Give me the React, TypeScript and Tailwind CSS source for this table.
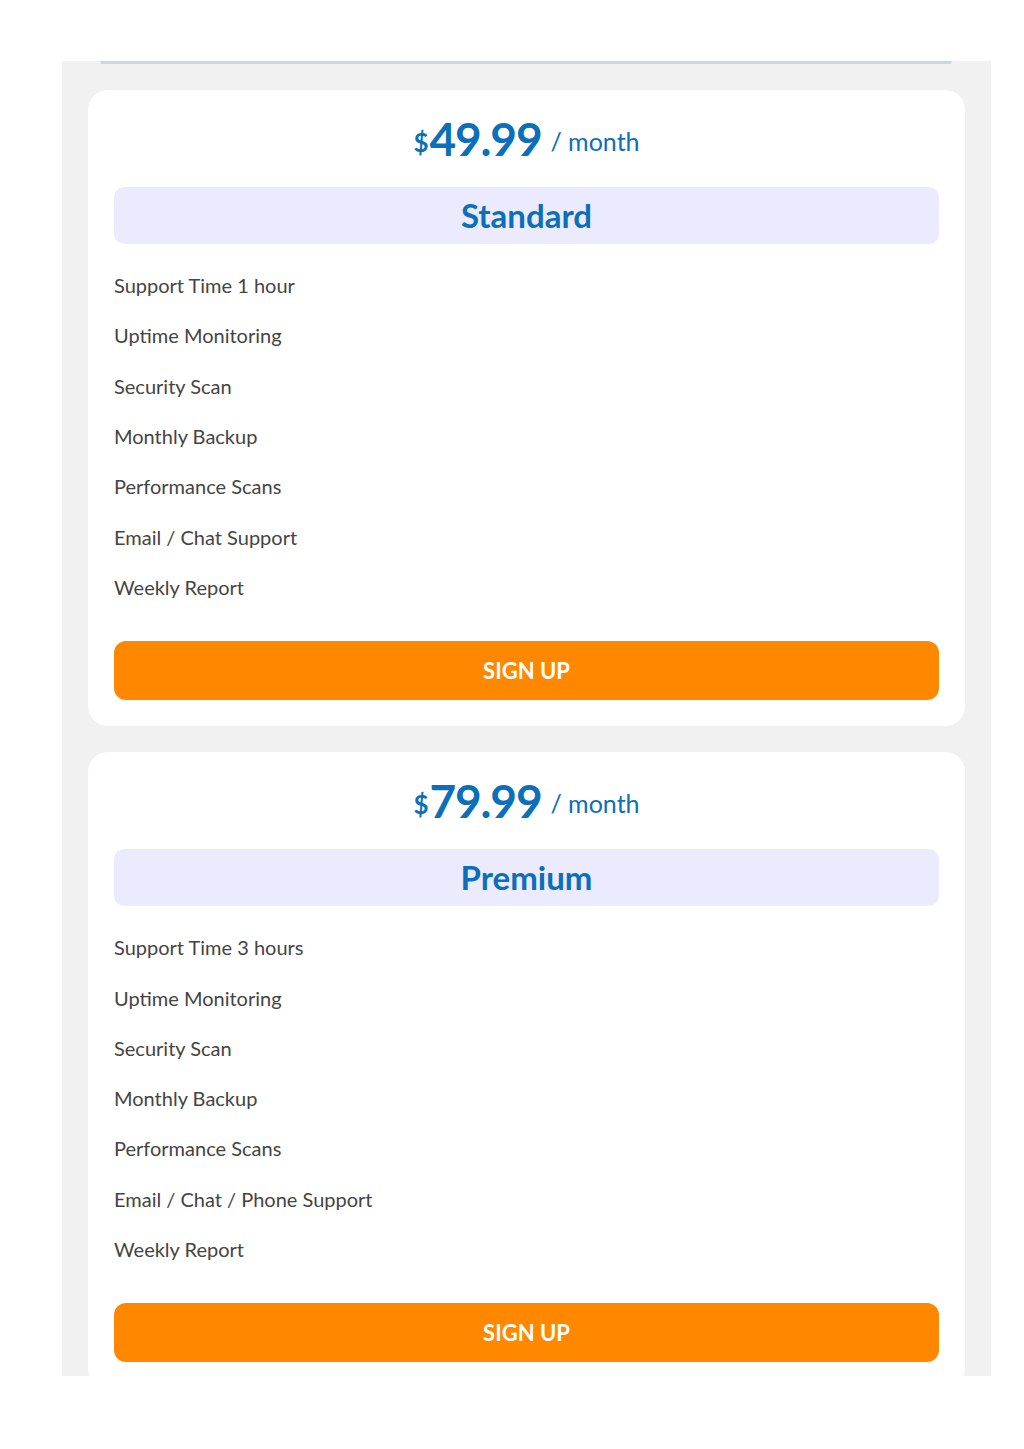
const plans = [
  {
    price: "49.99",
    name: "Standard",
    features: [
      "Support Time 1 hour",
      "Uptime Monitoring",
      "Security Scan",
      "Monthly Backup",
      "Performance Scans",
      "Email / Chat Support",
      "Weekly Report",
    ],
  },
  {
    price: "79.99",
    name: "Premium",
    features: [
      "Support Time 3 hours",
      "Uptime Monitoring",
      "Security Scan",
      "Monthly Backup",
      "Performance Scans",
      "Email / Chat / Phone Support",
      "Weekly Report",
    ],
  },
];

const PlanCard = ({ plan }: { plan: (typeof plans)[number] }) => {
  return (
    <div className="bg-white rounded-[20px] px-[26px] pt-[20px] pb-[26px] shrink-0">
      {/* Price */}
      <div className="flex items-center justify-center text-[#0b6fba] h-[58px] pt-[4px]">
        <span className="flex items-baseline">
          <span className="text-[26px] font-bold relative -top-[4px] mr-[1px]">$</span>
          <span className="text-[46px] font-bold leading-none tracking-tight">{plan.price}</span>
        </span>
        <span className="text-[25px] ml-[9px] mt-[2px]">/ month</span>
      </div>

      {/* Plan name */}
      <div className="mt-[19px] h-[57px] rounded-[10px] bg-[#ecebfd] flex items-center justify-center">
        <span className="text-[33px] font-bold text-[#0b6fba]">{plan.name}</span>
      </div>

      {/* Features */}
      <ul className="mt-[16px] flex flex-col">
        {plan.features.map((f) => (
          <li key={f} className="h-[50.3px] flex items-center text-[20px] text-[#444444]">
            {f}
          </li>
        ))}
      </ul>

      <button className="mt-[29px] w-full h-[59px] rounded-[12px] bg-[#ff8800] text-white text-[22px] font-bold">
        SIGN UP
      </button>
    </div>
  );
};

export default function App() {
  return (
    <div className="bg-white w-[1024px] h-[1449px]" style={{ fontFamily: "Lato, 'Open Sans', sans-serif" }}>
      <div className="h-[61px]" />
      <div className="ml-[62px] w-[929px] h-[1315px] bg-[#f1f1f1] overflow-hidden relative">
        {/* bottom edge of previous card */}
        <div className="absolute left-[38px] right-[39px] top-0 h-[3px] bg-[#c6d9e8] rounded-b-full" />
        <div className="flex flex-col gap-[26px] px-[26px] pt-[29px]">
          {plans.map((p) => (
            <PlanCard key={p.name} plan={p} />
          ))}
        </div>
      </div>
    </div>
  );
}
